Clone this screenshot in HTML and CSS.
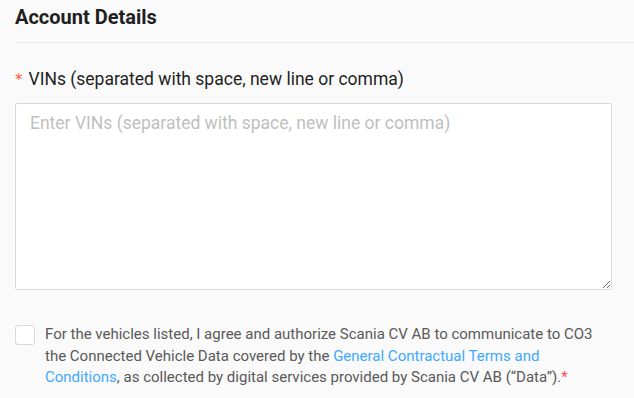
FILE: index.html
```html
<!DOCTYPE html>
<html>
<head>
<meta charset="utf-8">
<link rel="stylesheet" href="styles.css">
</head>
<body>
<div class="page">
  <h2 class="title">Account Details</h2>
  <div class="divider"></div>
  <div class="field">
    <label class="label"><span class="req">*</span>VINs (separated with space, new line or comma)</label>
    <textarea class="input" placeholder="Enter VINs (separated with space, new line or comma)"></textarea>
  </div>
  <div class="consent">
    <span class="box"></span>
    <p class="text">For the vehicles listed, I agree and authorize Scania CV AB to communicate to CO3 the Connected Vehicle Data covered by the <a class="link" href="#">General Contractual Terms and Conditions</a>, as collected by digital services provided by Scania CV AB (“Data”).<span class="star">*</span></p>
  </div>
</div>
</body>
</html>
```
FILE: styles.css
```css
html, body {
  margin: 0;
  padding: 0;
  background: #fafafa;
}
body {
  font-family: Roboto, "Noto Sans", sans-serif;
  color: #262626;
}
.page {
  padding: 4px 0 0 15px;
}
.title {
  margin: 0;
  font-size: 20px;
  font-weight: 700;
  line-height: 26px;
  color: #1f1f1f;
}
.divider {
  height: 1px;
  background: #e8e8e8;
  margin-top: 12px;
}
.field {
  padding-top: 24px;
  width: 597px;
}
.label {
  display: block;
  font-size: 17.5px;
  line-height: 24px;
  color: #1f1f1f;
  margin-bottom: 11px;
}
.req {
  color: #ff5a3c;
  margin-right: 6px;
  font-family: SimSun, "DejaVu Sans", sans-serif;
  font-size: 15px;
}
.input {
  display: block;
  box-sizing: border-box;
  width: 597px;
  height: 187px;
  margin: 0;
  border: 1px solid #d9d9d9;
  border-radius: 2px;
  background: #fff;
  padding: 7px 14px;
  font-family: Roboto, "Noto Sans", sans-serif;
  font-size: 17.5px;
  line-height: 24px;
  color: #262626;
  resize: vertical;
  outline: none;
}
.input::placeholder {
  color: #bfbfbf;
}
.consent {
  display: flex;
  gap: 10px;
  margin-top: 34px;
  width: 585px;
}
.box {
  flex: none;
  box-sizing: border-box;
  width: 20px;
  height: 20px;
  border: 1px solid #d9d9d9;
  border-radius: 3px;
  background: #fff;
  margin-top: 1px;
}
.text {
  flex: 1;
  min-width: 0;
  margin: 0;
  font-size: 15px;
  line-height: 21.5px;
  color: #595959;
}
.link {
  color: #40a9ff;
  text-decoration: none;
}
.star {
  color: #ff4d4f;
}
```
